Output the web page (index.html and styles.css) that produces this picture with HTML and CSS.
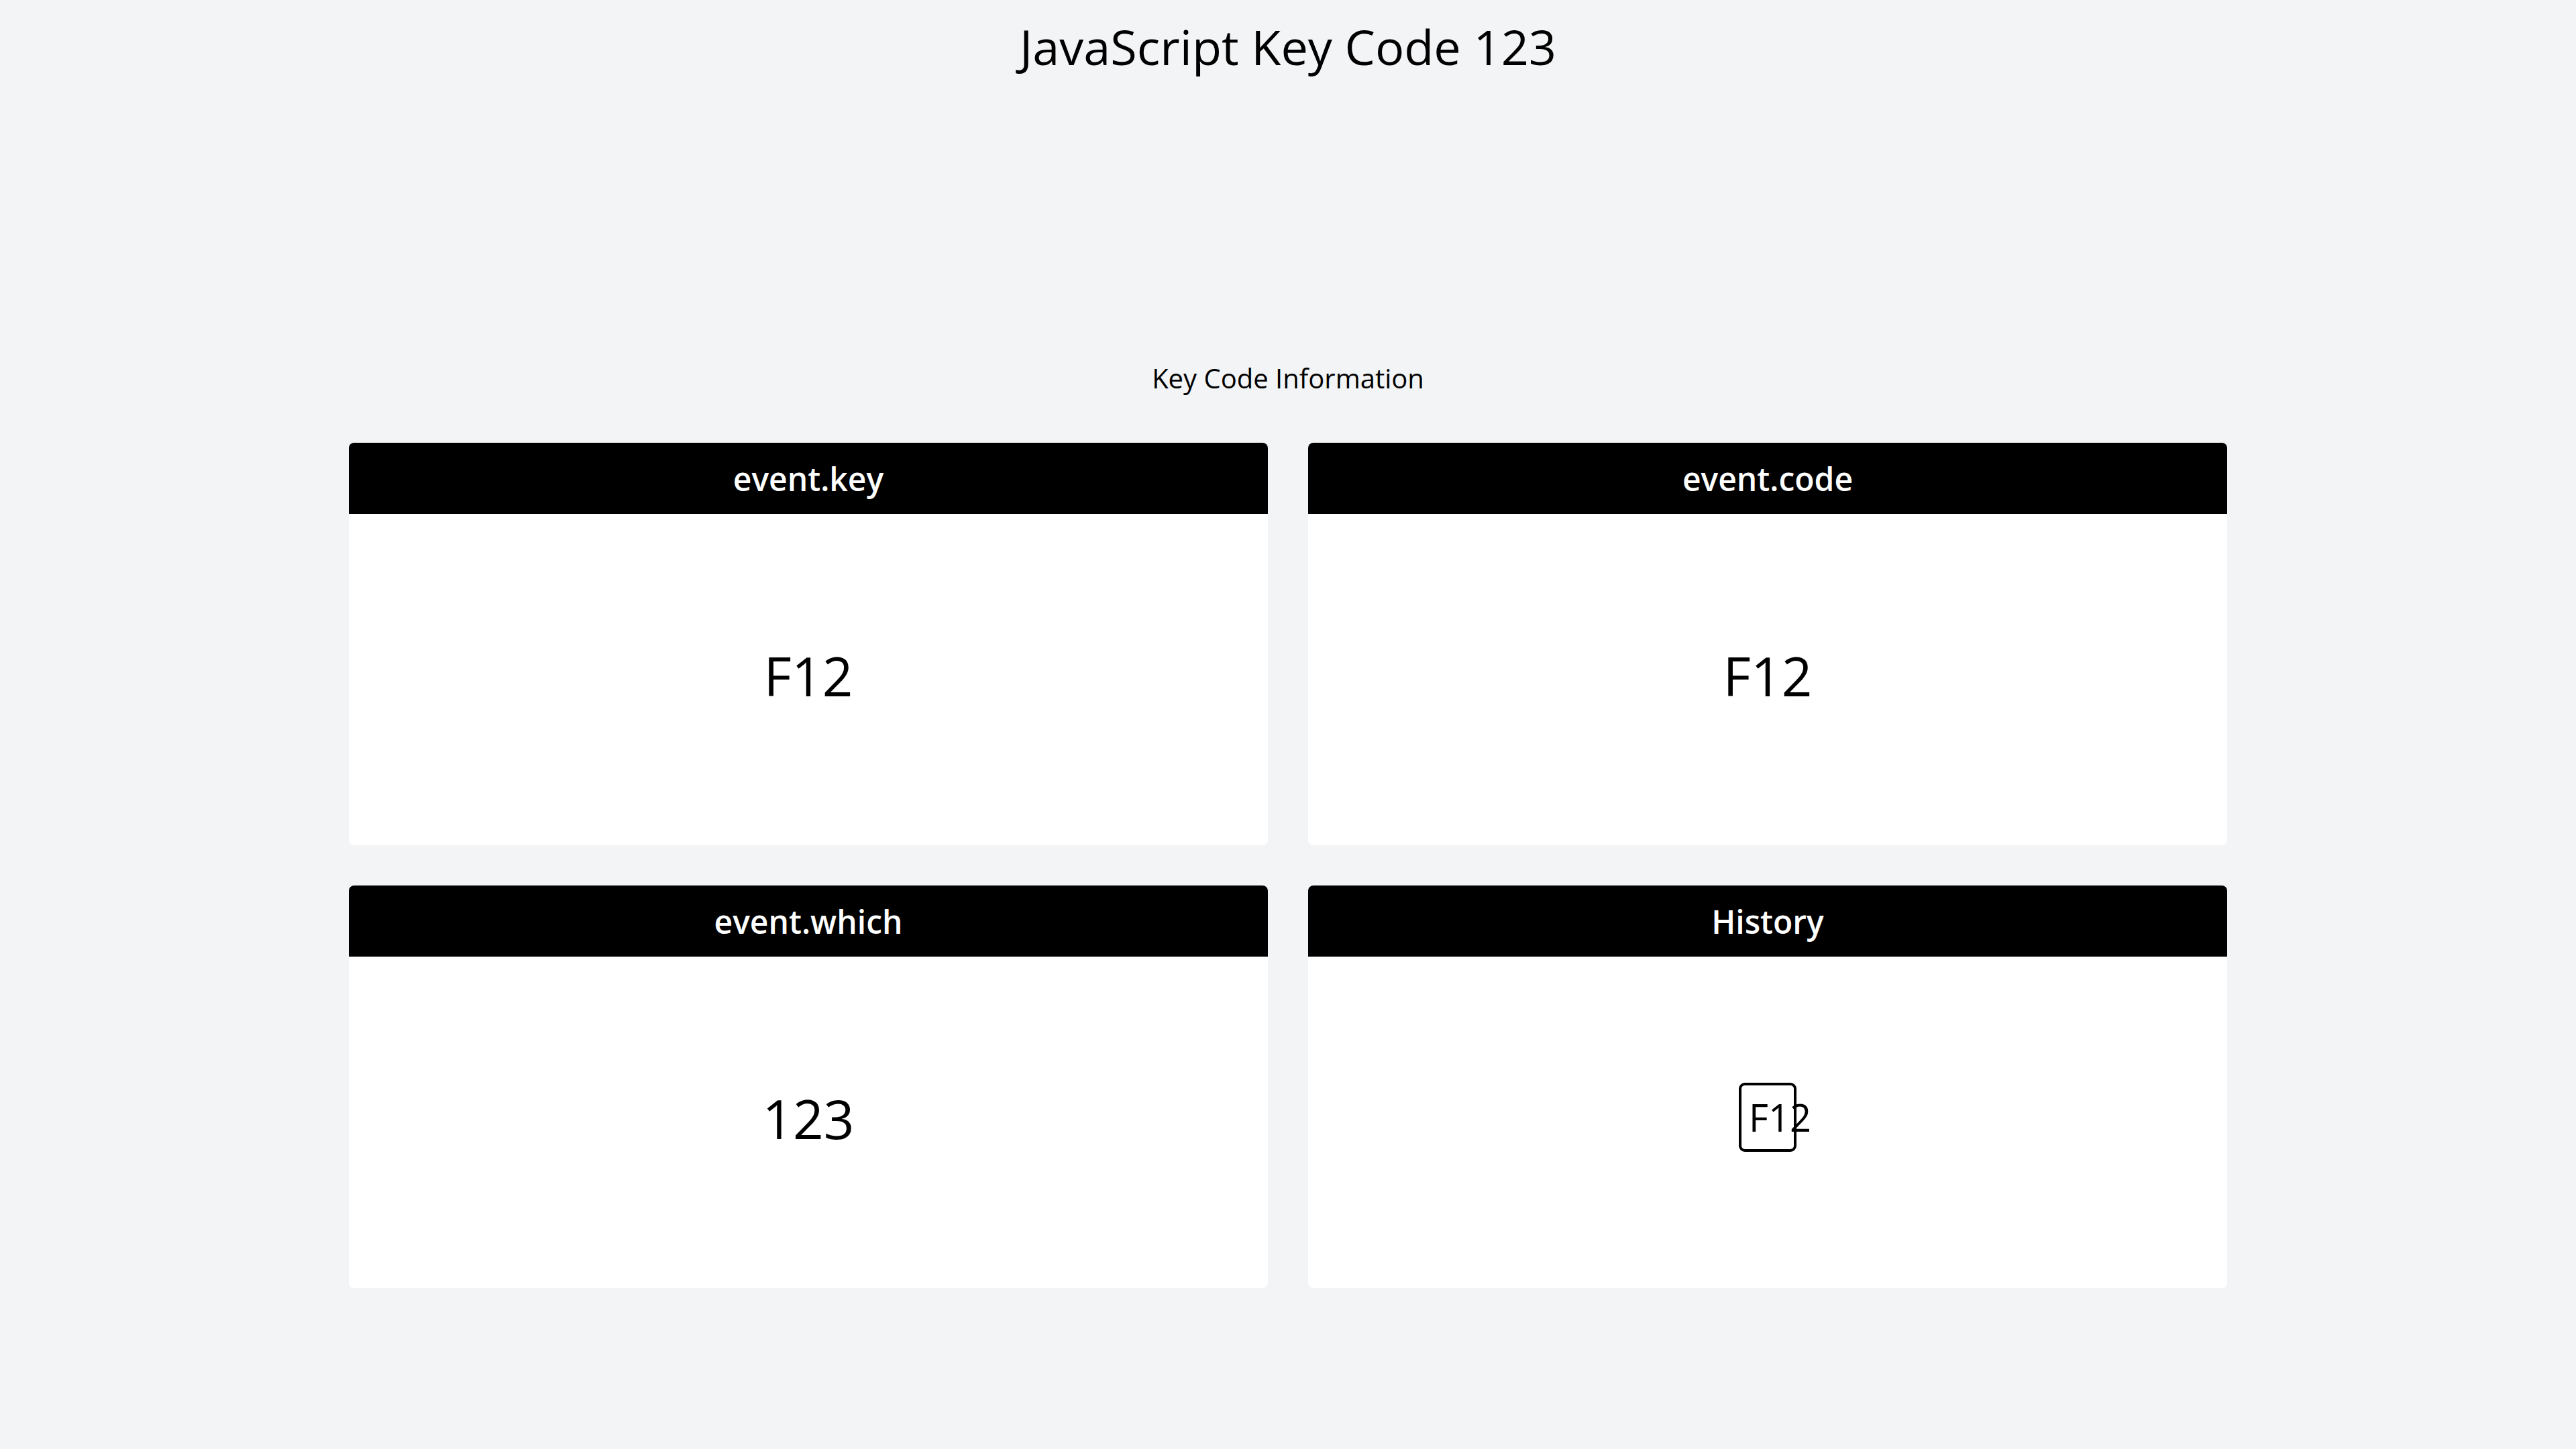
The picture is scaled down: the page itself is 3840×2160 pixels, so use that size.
FILE: index.html
```html
<!DOCTYPE html>
<html lang="en">
<head>
<meta charset="utf-8">
<title>JavaScript Key Code 123</title>
<link rel="stylesheet" href="styles.css">
</head>
<body>
<main class="page">
  <h1 class="title">JavaScript Key Code 123</h1>
  <section class="info">
    <h2 class="info-title">Key Code Information</h2>
    <div class="grid">
      <div class="card">
        <div class="card-head">event.key</div>
        <div class="card-body"><span class="value">F12</span></div>
      </div>
      <div class="card">
        <div class="card-head">event.code</div>
        <div class="card-body"><span class="value">F12</span></div>
      </div>
      <div class="card">
        <div class="card-head">event.which</div>
        <div class="card-body"><span class="value">123</span></div>
      </div>
      <div class="card">
        <div class="card-head">History</div>
        <div class="card-body"><span class="key">F12</span></div>
      </div>
    </div>
  </section>
</main>
</body>
</html>
```

FILE: styles.css
```css
html, body {
  margin: 0;
  padding: 0;
}
body {
  background: #f3f4f6;
  color: #000;
  font-family: "Open Sans", "Noto Sans", sans-serif;
  min-height: 2160px;
}
.page {
  display: flex;
  flex-direction: column;
  align-items: center;
}
.title {
  margin: 20px 0 0;
  font-size: 72px;
  font-weight: 400;
  line-height: 98px;
}
.info {
  width: 2800px;
  margin-top: 417px;
  display: flex;
  flex-direction: column;
  align-items: center;
}
.info-title {
  margin: 0;
  font-size: 40px;
  font-weight: 400;
  line-height: 57px;
}
.grid {
  margin-top: 68px;
  width: 100%;
  display: grid;
  grid-template-columns: 1fr 1fr;
  gap: 60px;
}
.card {
  background: #fff;
  border-radius: 8px;
  height: 600px;
  display: flex;
  flex-direction: column;
  overflow: hidden;
}
.card-head {
  background: #000;
  color: #fff;
  height: 106px;
  display: flex;
  align-items: center;
  justify-content: center;
  font-size: 48px;
  font-weight: 600;
}
.card-body {
  flex: 1;
  display: flex;
  align-items: center;
  justify-content: center;
  padding-bottom: 12px;
}
.value {
  font-size: 80px;
  line-height: 1;
}
.key {
  box-sizing: border-box;
  width: 86px;
  height: 103px;
  border: 4px solid #000;
  border-radius: 9px;
  padding: 0 11px;
  font-size: 56px;
  line-height: 95px;
  white-space: nowrap;
  overflow: visible;
  margin-bottom: 4px;
}
```
